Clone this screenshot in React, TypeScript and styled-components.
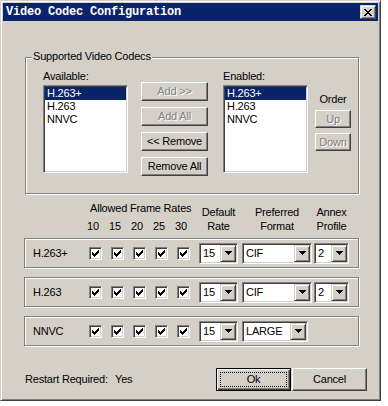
import React from 'react';
import styled, { createGlobalStyle, css } from 'styled-components';

const FACE = '#d4d0c8';
const SHADOW = '#808080';
const DARK = '#404040';
const NAVY = '#0a246a';

const GlobalStyle = createGlobalStyle`
  html, body { margin: 0; padding: 0; background: #ffffff; }
  body {
    font-family: "Liberation Sans", Arial, sans-serif;
    font-size: 11px;
    letter-spacing: -0.2px;
    color: #000;
  }
  * { box-sizing: border-box; }
`;

const raised = css`
  background: ${FACE};
  border: 1px solid;
  border-color: #fff ${DARK} ${DARK} #fff;
  box-shadow: inset -1px -1px ${SHADOW};
`;

const raisedSmall = css`
  background: ${FACE};
  border: 1px solid;
  border-color: ${FACE} ${DARK} ${DARK} ${FACE};
  box-shadow: inset 1px 1px #fff, inset -1px -1px ${SHADOW};
`;

const sunken = css`
  background: #fff;
  border: 1px solid;
  border-color: ${SHADOW} #fff #fff ${SHADOW};
  box-shadow: inset 1px 1px ${DARK}, inset -1px -1px ${FACE};
`;

const etched = css`
  border: 1px solid ${SHADOW};
  box-shadow: inset 1px 1px #fff, 1px 1px #fff;
`;

const Window = styled.div`
  width: 381px;
  height: 401px;
  background: ${FACE};
  border: 1px solid;
  border-color: ${FACE} ${DARK} ${DARK} ${FACE};
  box-shadow: inset 1px 1px #fff, inset -1px -1px ${SHADOW};
  padding: 2px;
  display: flex;
  flex-direction: column;
`;

const TitleBar = styled.div`
  height: 18px;
  background: ${NAVY};
  display: flex;
  align-items: center;
  padding-left: 3px;
  flex-shrink: 0;
`;

const TitleText = styled.span`
  font-family: "Liberation Mono", "DejaVu Sans Mono", monospace;
  font-weight: bold;
  font-size: 12px;
  letter-spacing: -0.2px;
  color: #fff;
  line-height: 14px;
`;

const CloseButton = styled.div`
  ${raisedSmall};
  margin-left: auto;
  margin-right: 2px;
  width: 16px;
  height: 14px;
  display: flex;
  align-items: center;
  justify-content: center;
`;

const Body = styled.div`
  flex: 1;
  display: flex;
  flex-direction: column;
  padding-left: 21px;
`;

const GroupBox = styled.div`
  ${etched};
  position: relative;
  margin-top: 36px;
  margin-left: 1px;
  width: 334px;
  height: 137px;
  padding: 12px 0 0 17px;
  display: flex;
  align-items: flex-start;
`;

const GroupLabel = styled.span`
  position: absolute;
  top: -8px;
  left: 6px;
  padding: 0 1px;
  background: ${FACE};
  line-height: 13px;
`;

const ListColumn = styled.div<{ $ml?: number }>`
  display: flex;
  flex-direction: column;
  margin-left: ${p => p.$ml ?? 0}px;
`;

const ListLabel = styled.div`
  line-height: 13px;
  height: 13px;
  margin-bottom: 2px;
`;

const ListBox = styled.div`
  ${sunken};
  width: 85px;
  height: 88px;
  padding: 1px;
`;

const ListItem = styled.div<{ $selected?: boolean }>`
  height: 13px;
  line-height: 13px;
  padding-left: 2px;
  white-space: nowrap;
  ${p => p.$selected && css`
    background: ${NAVY};
    color: #fff;
  `}
`;

const ButtonColumn = styled.div`
  display: flex;
  flex-direction: column;
  gap: 6px;
  margin-left: 13px;
  margin-top: 12px;
`;

const Button = styled.div<{ $w: number; $h: number; $disabled?: boolean }>`
  ${raised};
  width: ${p => p.$w}px;
  height: ${p => p.$h}px;
  display: flex;
  align-items: center;
  justify-content: center;
  line-height: 13px;
  white-space: nowrap;
  ${p => p.$disabled && css`
    color: ${SHADOW};
    text-shadow: 1px 1px 0 #fff;
  `}
`;

const OrderColumn = styled.div`
  display: flex;
  flex-direction: column;
  align-items: center;
  width: 36px;
  margin-left: 7px;
`;

const OrderLabel = styled.div`
  line-height: 13px;
  margin-top: 23px;
  margin-bottom: 4px;
`;

const OrderButtons = styled.div`
  display: flex;
  flex-direction: column;
  gap: 5px;
`;

const COLS = '56px repeat(5, 22px) 43px 72px 35px';

const HeaderGrid = styled.div`
  display: grid;
  grid-template-columns: ${COLS};
  align-items: end;
  margin-top: 8px;
  padding-left: 9px;
`;

const FrameRatesHead = styled.div`
  grid-column: 2 / span 5;
  display: flex;
  flex-direction: column;
`;

const FrameRatesTitle = styled.div`
  line-height: 13px;
  padding-left: 1px;
  margin-bottom: 4px;
  white-space: nowrap;
`;

const RateNumbers = styled.div`
  display: grid;
  grid-template-columns: repeat(5, 22px);
  line-height: 14px;
`;

const RateNumber = styled.span`
  margin-left: -2px;
`;

const HeadCell = styled.div<{ $w: number }>`
  width: ${p => p.$w}px;
  text-align: center;
  line-height: 14px;
  white-space: nowrap;
`;

const Rows = styled.div`
  display: flex;
  flex-direction: column;
  gap: 9px;
  margin-top: 5px;
`;

const CodecRow = styled.div`
  ${etched};
  display: grid;
  grid-template-columns: ${COLS};
  align-items: center;
  width: 335px;
  height: 30px;
  padding-left: 8px;
`;

const RowLabel = styled.span`
  line-height: 13px;
`;

const CheckBox = styled.span`
  ${sunken};
  display: block;
  width: 13px;
  height: 13px;
  padding: 1px;
  svg { display: block; }
`;

const Combo = styled.div<{ $w: number }>`
  ${sunken};
  width: ${p => p.$w}px;
  height: 21px;
  padding: 1px;
  display: flex;
  align-items: stretch;
`;

const ComboText = styled.span`
  flex: 1;
  line-height: 17px;
  padding-left: 2px;
  white-space: nowrap;
  overflow: hidden;
`;

const ComboArrow = styled.span`
  ${raisedSmall};
  width: 16px;
  display: flex;
  align-items: center;
  justify-content: center;
`;

const Footer = styled.div`
  display: flex;
  align-items: center;
  margin-top: 22px;
  margin-right: 11px;
`;

const RestartLabel = styled.span`
  width: 90px;
  margin-left: 1px;
  line-height: 13px;
  white-space: nowrap;
`;

const RestartValue = styled.span`
  line-height: 13px;
`;

const FooterButtons = styled.div`
  margin-left: auto;
  display: flex;
  gap: 1px;
`;

const DefaultButton = styled.div`
  position: relative;
  width: 75px;
  height: 23px;
  background: ${FACE};
  border: 1px solid #000;
  box-shadow: inset 1px 1px #fff, inset -1px -1px ${DARK}, inset -2px -2px ${SHADOW};
  display: flex;
  align-items: center;
  justify-content: center;
  line-height: 13px;
  &::after {
    content: '';
    position: absolute;
    inset: 3px;
    border: 1px dotted #000;
  }
`;

const CheckMark = () => (
  <svg width="9" height="9" viewBox="0 0 9 9" shapeRendering="crispEdges">
    <rect x="1" y="3" width="1" height="3" fill="#000" />
    <rect x="2" y="4" width="1" height="3" fill="#000" />
    <rect x="3" y="5" width="1" height="3" fill="#000" />
    <rect x="4" y="4" width="1" height="3" fill="#000" />
    <rect x="5" y="3" width="1" height="3" fill="#000" />
    <rect x="6" y="2" width="1" height="3" fill="#000" />
    <rect x="7" y="1" width="1" height="3" fill="#000" />
  </svg>
);

const DownArrow = () => (
  <svg width="7" height="4" viewBox="0 0 7 4" shapeRendering="crispEdges">
    <rect x="0" y="0" width="7" height="1" fill="#000" />
    <rect x="1" y="1" width="5" height="1" fill="#000" />
    <rect x="2" y="2" width="3" height="1" fill="#000" />
    <rect x="3" y="3" width="1" height="1" fill="#000" />
  </svg>
);

const CloseGlyph = () => (
  <svg width="8" height="7" viewBox="0 0 8 7" shapeRendering="crispEdges">
    <rect x="0" y="0" width="2" height="1" fill="#000" />
    <rect x="6" y="0" width="2" height="1" fill="#000" />
    <rect x="1" y="1" width="2" height="1" fill="#000" />
    <rect x="5" y="1" width="2" height="1" fill="#000" />
    <rect x="2" y="2" width="4" height="1" fill="#000" />
    <rect x="3" y="3" width="2" height="1" fill="#000" />
    <rect x="2" y="4" width="4" height="1" fill="#000" />
    <rect x="1" y="5" width="2" height="1" fill="#000" />
    <rect x="5" y="5" width="2" height="1" fill="#000" />
    <rect x="0" y="6" width="2" height="1" fill="#000" />
    <rect x="6" y="6" width="2" height="1" fill="#000" />
  </svg>
);

const ComboBox: React.FC<{ width: number; value: string }> = ({ width, value }) => (
  <Combo $w={width}>
    <ComboText>{value}</ComboText>
    <ComboArrow><DownArrow /></ComboArrow>
  </Combo>
);

const codecs = ['H.263+', 'H.263', 'NNVC'];
const rates = ['10', '15', '20', '25', '30'];

const rows = [
  { name: 'H.263+', rate: '15', format: 'CIF', formatW: 70, profile: '2' as string | null },
  { name: 'H.263', rate: '15', format: 'CIF', formatW: 70, profile: '2' as string | null },
  { name: 'NNVC', rate: '15', format: 'LARGE', formatW: 66, profile: null as string | null },
];

export default function App() {
  return (
    <>
      <GlobalStyle />
      <Window>
        <TitleBar>
          <TitleText>Video Codec Configuration</TitleText>
          <CloseButton><CloseGlyph /></CloseButton>
        </TitleBar>
        <Body>
          <GroupBox>
            <GroupLabel>Supported Video Codecs</GroupLabel>
            <ListColumn>
              <ListLabel>Available:</ListLabel>
              <ListBox>
                {codecs.map((c, i) => (
                  <ListItem key={c} $selected={i === 0}>{c}</ListItem>
                ))}
              </ListBox>
            </ListColumn>
            <ButtonColumn>
              <Button $w={67} $h={19} $disabled>Add &gt;&gt;</Button>
              <Button $w={67} $h={19} $disabled>Add All</Button>
              <Button $w={67} $h={19}>&lt;&lt; Remove</Button>
              <Button $w={67} $h={19}>Remove All</Button>
            </ButtonColumn>
            <ListColumn $ml={15}>
              <ListLabel>Enabled:</ListLabel>
              <ListBox>
                {codecs.map((c, i) => (
                  <ListItem key={c} $selected={i === 0}>{c}</ListItem>
                ))}
              </ListBox>
            </ListColumn>
            <OrderColumn>
              <OrderLabel>Order</OrderLabel>
              <OrderButtons>
                <Button $w={36} $h={18} $disabled>Up</Button>
                <Button $w={36} $h={18} $disabled>Down</Button>
              </OrderButtons>
            </OrderColumn>
          </GroupBox>

          <HeaderGrid>
            <FrameRatesHead>
              <FrameRatesTitle>Allowed Frame Rates</FrameRatesTitle>
              <RateNumbers>
                {rates.map(r => <RateNumber key={r}>{r}</RateNumber>)}
              </RateNumbers>
            </FrameRatesHead>
            <HeadCell $w={39}>Default<br />Rate</HeadCell>
            <HeadCell $w={70}>Preferred<br />Format</HeadCell>
            <HeadCell $w={35}>Annex<br />Profile</HeadCell>
          </HeaderGrid>

          <Rows>
            {rows.map(r => (
              <CodecRow key={r.name}>
                <RowLabel>{r.name}</RowLabel>
                {rates.map(rt => (
                  <CheckBox key={rt}><CheckMark /></CheckBox>
                ))}
                <ComboBox width={39} value={r.rate} />
                <ComboBox width={r.formatW} value={r.format} />
                {r.profile ? <ComboBox width={35} value={r.profile} /> : <span />}
              </CodecRow>
            ))}
          </Rows>

          <Footer>
            <RestartLabel>Restart Required:</RestartLabel>
            <RestartValue>Yes</RestartValue>
            <FooterButtons>
              <DefaultButton>Ok</DefaultButton>
              <Button $w={75} $h={23}>Cancel</Button>
            </FooterButtons>
          </Footer>
        </Body>
      </Window>
    </>
  );
}
